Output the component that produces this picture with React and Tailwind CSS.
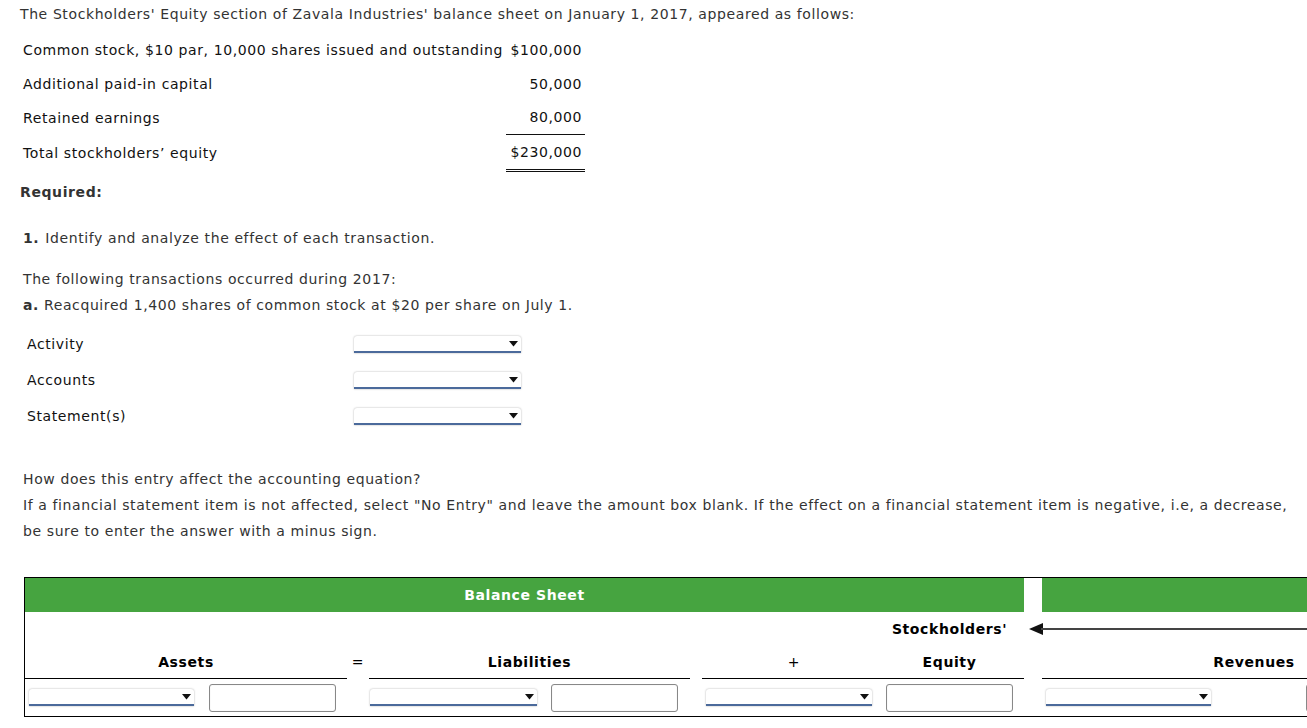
import React from "react";

const font = { fontFamily: '"DejaVu Sans", Verdana, sans-serif' };

function Sel({ w }) {
  return (
    <div
      className="relative h-[17px] bg-white rounded-t-[3px] border-b-2 border-[#4b6a9b] shadow-[0_0_2px_rgba(0,0,0,0.35)]"
      style={{ width: w }}
    >
      <svg className="absolute right-[3px] top-[5px]" width="9" height="6" viewBox="0 0 9 6">
        <path d="M0 0 H9 L4.5 5.5 Z" fill="#111" />
      </svg>
    </div>
  );
}

function Inp() {
  return <div className="w-[127px] h-[28px] rounded-[3px] border border-[#888] bg-white shadow-[inset_0_0_1px_rgba(0,0,0,0.2)]" />;
}

export default function App() {
  return (
    <div className="w-[1307px] h-[728px] overflow-hidden bg-white text-[#333] text-[14px] tracking-[0.6px] relative" style={font}>
      <div className="pl-[20px] pt-[4px] leading-[20px]">
        The Stockholders' Equity section of Zavala Industries' balance sheet on January 1, 2017, appeared as follows:
      </div>

      <div className="ml-[20px] mt-[9px] w-[565px] text-[#111]">
        <div className="flex h-[34px] items-center">
          <div className="flex-1 pl-[3px]">Common stock, $10 par, 10,000 shares issued and outstanding</div>
          <div className="w-[79px] text-right pr-[3px]">$100,000</div>
        </div>
        <div className="flex h-[34px] items-center">
          <div className="flex-1 pl-[3px]">Additional paid-in capital</div>
          <div className="w-[79px] text-right pr-[3px]">50,000</div>
        </div>
        <div className="flex h-[34px] items-center">
          <div className="flex-1 pl-[3px]">Retained earnings</div>
          <div className="w-[79px] text-right pr-[3px] self-stretch flex items-center justify-end border-b border-[#111]">80,000</div>
        </div>
        <div className="flex h-[37px] items-center">
          <div className="flex-1 pl-[3px]">Total stockholders’ equity</div>
          <div className="w-[79px] text-right pr-[3px] self-stretch flex items-center justify-end border-b-[3px] border-double border-[#111]">$230,000</div>
        </div>
      </div>

      <div className="pl-[20px] mt-[10px] font-bold leading-[20px]">Required:</div>

      <div className="pl-[23px] mt-[26px] leading-[20px]"><b>1.</b><span className="ml-[6px]">Identify and analyze the effect of each transaction.</span></div>

      <div className="pl-[23px] mt-[18px] leading-[26px]">
        <div>The following transactions occurred during 2017:</div>
        <div><b>a.</b> Reacquired 1,400 shares of common stock at $20 per share on July 1.</div>
      </div>

      <div className="pl-[27px] mt-[8px] text-[#111]">
        {["Activity", "Accounts", "Statement(s)"].map((t) => (
          <div key={t} className="flex items-center h-[36px]">
            <div className="w-[327px]">{t}</div>
            <Sel w={167} />
          </div>
        ))}
      </div>

      <div className="pl-[23px] mt-[32px] leading-[26px]">
        <div>How does this entry affect the accounting equation?</div>
        <div>
          If a financial statement item is not affected, select "No Entry" and leave the amount box blank. If the effect on a financial statement item is negative, i.e, a decrease,
        </div>
        <div>be sure to enter the answer with a minus sign.</div>
      </div>

      <div className="ml-[24px] mt-[33px] w-[1500px] border-t border-l border-b border-black text-black font-bold text-[14px]">
        <div className="flex h-[34px]">
          <div className="w-[999px] bg-[#46a440] text-white flex items-center justify-center">Balance Sheet</div>
          <div className="w-[18px]" />
          <div className="flex-1 bg-[#46a440]" />
        </div>
        <div className="flex h-[34px] items-center">
          <div className="w-[861px]" />
          <div className="w-[127px] text-center">Stockholders'</div>
          <div className="flex-1 flex items-center pl-[16px]">
            <svg width="20" height="12" viewBox="0 0 20 12" className="shrink-0">
              <path d="M0 6 L14 0 L14 12 Z" fill="#111" />
            </svg>
            <div className="h-[2px] flex-1 bg-[#444] -ml-[8px]" />
          </div>
        </div>
        <div className="flex h-[33px] items-center">
          <div className="w-[322px] h-full flex items-center justify-center border-b border-black">Assets</div>
          <div className="w-[22px] text-center font-normal">=</div>
          <div className="w-[321px] h-full flex items-center justify-center border-b border-black">Liabilities</div>
          <div className="w-[12px]" />
          <div className="w-[322px] h-full flex items-center border-b border-black">
            <div className="w-[184px] text-center font-normal">+</div>
            <div className="w-[127px] text-center">Equity</div>
          </div>
          <div className="w-[18px]" />
          <div className="w-[424px] h-full flex items-center justify-center border-b border-black">Revenues</div>
          <div className="flex-1 h-full border-b border-black" />
        </div>
        <div className="flex h-[37px] items-center">
          <div className="w-[322px] flex items-center pl-[4px] gap-[15px]"><Sel w={165} /><Inp /></div>
          <div className="w-[22px]" />
          <div className="w-[321px] flex items-center pl-[1px] gap-[14px]"><Sel w={167} /><Inp /></div>
          <div className="w-[12px]" />
          <div className="w-[322px] flex items-center pl-[4px] gap-[14px]"><Sel w={166} /><Inp /></div>
          <div className="w-[18px]" />
          <div className="w-[424px] flex items-center pl-[4px] gap-[95px]"><Sel w={165} /><Inp /></div>
        </div>
      </div>
    </div>
  );
}
